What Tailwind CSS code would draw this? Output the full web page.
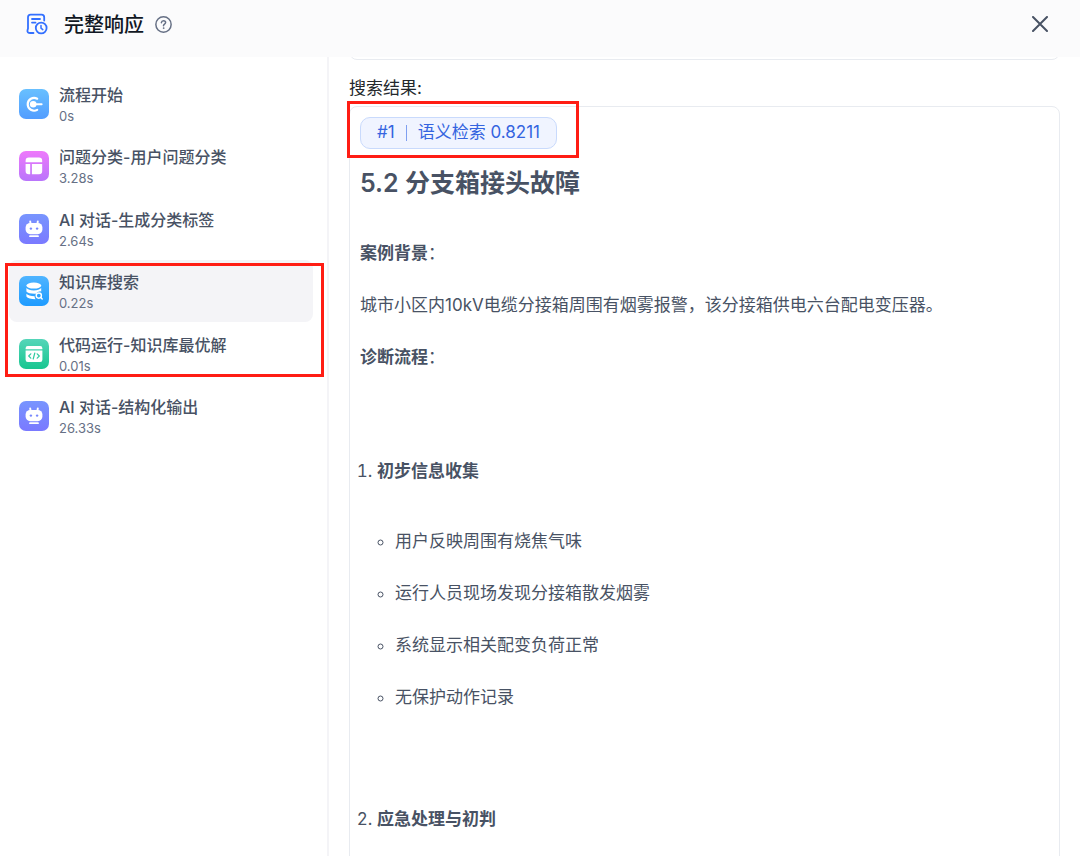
<!DOCTYPE html>
<html lang="zh-CN">
<head>
    <meta charset="UTF-8">
    <meta name="viewport" content="width=device-width, initial-scale=1.0">
    <title>完整响应</title>
    <script src="https://cdn.jsdelivr.net/npm/@tailwindcss/browser@4"></script>
</head>
<body class="h-screen flex flex-col overflow-hidden bg-white text-[#485264] font-['Inter','Noto_Sans_CJK_SC',sans-serif]">
    <!-- Header -->
    <header class="relative z-10 h-[57px] shrink-0 bg-[#fbfbfc] flex items-start pl-[26px] pr-7 pt-2">
        <div class="flex h-8 flex-1 items-center">
            <svg class="size-[22px]" viewBox="0 0 22 22" fill="none" stroke="#3370ff" stroke-width="1.8" stroke-linecap="round" stroke-linejoin="round">
                <path d="M7.5 20H4.2C2.2 20 1.1 19 1.5 17.2L2 15.5V4.2C2 2.6 3 1.6 4.6 1.6H15.6C17.2 1.6 18.2 2.6 18.2 4.2V7.6" />
                <path d="M6 6H14M6 9.6H9.5" />
                <circle cx="15.2" cy="15" r="5.4" />
                <path d="M15 12.6V15.2L16.8 16.6" stroke-width="1.5" />
            </svg>
            <h1 class="ml-4 pt-0.5 text-[20px] leading-8 font-medium text-[#111824]">完整响应</h1>
            <button type="button" aria-label="帮助" class="ml-[11px]">
                <svg class="size-[17px]" viewBox="0 0 16 16" fill="none" stroke="#667085" stroke-width="1.4" stroke-linecap="round">
                    <circle cx="8" cy="8" r="7.2" />
                    <path d="M6 6.3C6.2 5.1 7 4.5 8 4.5C9.2 4.5 10 5.2 10 6.2C10 7.6 8 7.8 8 9.1" />
                    <circle cx="8" cy="11.4" r=".4" fill="#667085" stroke-width=".8" />
                </svg>
            </button>
        </div>
        <button type="button" aria-label="关闭" class="flex h-8 w-6 items-center justify-center">
            <svg class="size-4" viewBox="0 0 16 16" fill="none" stroke="#485264" stroke-width="2" stroke-linecap="round">
                <path d="M1 1L15 15M15 1L1 15" />
            </svg>
        </button>
    </header>

    <div class="flex min-h-0 flex-1">
        <!-- Steps -->
        <aside class="w-[329px] shrink-0 border-r-2 border-[#f4f4f7] pt-4 pl-[9px] pr-3.5">
            <ul>
                <li class="flex h-[62px] items-center gap-2.5 rounded-lg px-2.5">
                    <svg class="size-[30px]" viewBox="0 0 30 30">
                        <defs><linearGradient id="start" x2="0" y2="1"><stop stop-color="#68c0ff" /><stop offset="1" stop-color="#529dff" /></linearGradient></defs>
                        <rect width="30" height="30" rx="7" fill="url(#start)" />
                        <path d="M18.2 9.7A6.4 6.4 0 1 0 18.2 20.9" fill="none" stroke="#fff" stroke-width="2.2" stroke-linecap="round" />
                        <circle cx="14.2" cy="15.3" r="3.3" fill="#fff" />
                        <path d="M15 15.3H22.6" stroke="#fff" stroke-width="2" stroke-linecap="round" />
                    </svg>
                    <div>
                        <p class="text-[16px] leading-6 font-medium">流程开始</p>
                        <p class="text-[13px] leading-[18px] text-[#667085]">0s</p>
                    </div>
                </li>
                <li class="flex h-[62px] items-center gap-2.5 rounded-lg px-2.5">
                    <svg class="size-[30px]" viewBox="0 0 30 30">
                        <defs><linearGradient id="classify" x2="0" y2="1"><stop stop-color="#ee79fb" /><stop offset="1" stop-color="#b975fb" /></linearGradient></defs>
                        <rect width="30" height="30" rx="7" fill="url(#classify)" />
                        <path d="M6.6 11.2V9.8Q6.6 6.6 9.8 6.6H20Q23.2 6.6 23.2 9.8V11.2ZM6.6 12.9H11.2V23.2H9.8Q6.6 23.2 6.6 20ZM12.9 12.9H23.2V20Q23.2 23.2 20 23.2H12.9Z" fill="#fff" />
                    </svg>
                    <div>
                        <p class="text-[16px] leading-6 font-medium">问题分类-用户问题分类</p>
                        <p class="text-[13px] leading-[18px] text-[#667085]">3.28s</p>
                    </div>
                </li>
                <li class="flex h-[63px] items-center gap-2.5 rounded-lg px-2.5">
                    <svg class="size-[30px]" viewBox="0 0 30 30">
                        <defs>
                            <linearGradient id="chat" x2="0" y2="1"><stop stop-color="#7895fe" /><stop offset="1" stop-color="#7a79ff" /></linearGradient>
                            <symbol id="bot" viewBox="0 0 30 30">
                                <rect width="30" height="30" rx="7" fill="url(#chat)" />
                                <path d="M11.2 7.4L11.6 10M18.8 7.4L18.4 10" stroke="#fff" stroke-width="1.9" stroke-linecap="round" />
                                <rect x="6.6" y="9" width="16.8" height="11.2" rx="4.6" fill="#fff" />
                                <circle cx="11.9" cy="14.6" r="1.2" fill="#7888fe" />
                                <circle cx="18.1" cy="14.6" r="1.2" fill="#7888fe" />
                                <path d="M11 22.2H19" stroke="#fff" stroke-width="1.8" stroke-linecap="round" />
                            </symbol>
                        </defs>
                        <use href="#bot" />
                    </svg>
                    <div>
                        <p class="text-[16px] leading-6 font-medium">AI 对话-生成分类标签</p>
                        <p class="text-[13px] leading-[18px] text-[#667085]">2.64s</p>
                    </div>
                </li>
                <li class="relative">
                    <div class="flex h-[62px] items-center gap-2.5 rounded-lg bg-[#f4f4f7] px-2.5">
                        <svg class="size-[30px]" viewBox="0 0 30 30">
                            <defs><linearGradient id="dataset" x2="0" y2="1"><stop stop-color="#4fb4ff" /><stop offset="1" stop-color="#1e9bff" /></linearGradient></defs>
                            <rect width="30" height="30" rx="7" fill="url(#dataset)" />
                            <ellipse cx="14.8" cy="9.6" rx="7.4" ry="3" fill="#fff" />
                            <path d="M7.4 12Q9.5 14.4 14.8 14.4T22.2 12V15.4Q19 14.8 16.6 17.8Q9.6 18 7.4 15.6ZM7.4 17.8Q9.6 20 15.6 20.2Q15.6 22 16.6 23.2Q9.4 23.2 7.4 20.6Z" fill="#fff" />
                            <circle cx="19.8" cy="19.6" r="2.6" fill="none" stroke="#fff" stroke-width="1.4" />
                            <path d="M21.8 21.4L23.2 22.9" stroke="#fff" stroke-width="1.4" stroke-linecap="round" />
                        </svg>
                        <div>
                            <p class="text-[16px] leading-6 font-medium">知识库搜索</p>
                            <p class="text-[13px] leading-[18px] text-[#667085]">0.22s</p>
                        </div>
                    </div>
                    <!-- Marks the search and code steps -->
                    <div class="pointer-events-none absolute top-[3px] -left-1 -right-[11px] h-[114px] border-3 border-[#ff1d14]"></div>
                </li>
                <li class="flex h-[63px] items-center gap-2.5 rounded-lg px-2.5">
                    <svg class="size-[30px]" viewBox="0 0 30 30">
                        <defs><linearGradient id="code" x2="0" y2="1"><stop stop-color="#55d5b9" /><stop offset="1" stop-color="#18c690" /></linearGradient></defs>
                        <rect width="30" height="30" rx="7" fill="url(#code)" />
                        <path d="M6.6 10.2V9.2Q6.6 7 8.8 7H21.2Q23.4 7 23.4 9.2V10.2ZM6.6 11.5H23.4V20.8Q23.4 23 21.2 23H8.8Q6.6 23 6.6 20.8Z" fill="#fff" />
                        <path d="M11.8 14.8L9.7 17L11.8 19.2M18.2 14.8L20.3 17L18.2 19.2M15.8 14L14.2 20" fill="none" stroke="#2ecb9f" stroke-width="1.2" stroke-linecap="round" stroke-linejoin="round" />
                    </svg>
                    <div>
                        <p class="text-[16px] leading-6 font-medium">代码运行-知识库最优解</p>
                        <p class="text-[13px] leading-[18px] text-[#667085]">0.01s</p>
                    </div>
                </li>
                <li class="flex h-[62px] items-center gap-2.5 rounded-lg px-2.5">
                    <svg class="size-[30px]" viewBox="0 0 30 30"><use href="#bot" /></svg>
                    <div>
                        <p class="text-[16px] leading-6 font-medium">AI 对话-结构化输出</p>
                        <p class="text-[13px] leading-[18px] text-[#667085]">26.33s</p>
                    </div>
                </li>
            </ul>
        </aside>

        <!-- Response detail -->
        <main class="min-w-0 flex-1 overflow-hidden pl-5 pr-5">
            <!-- Previous field, scrolled under the header -->
            <div class="-mt-8 h-[35px] rounded-lg border border-[#e8ebf0]"></div>
            <h2 class="mt-[15px] mb-[5px] text-[17px] leading-[26px] text-[#24282c]">搜索结果:</h2>

            <section class="relative rounded-lg border border-[#e8ebf0] px-2.5 pt-2.5 pb-10">
                <!-- Marks the score -->
                <div class="pointer-events-none absolute -top-1.5 -left-[3px] h-[57px] w-[232px] border-3 border-[#ff1d14]"></div>

                <div class="inline-flex h-8 items-center rounded-[10px] border border-[#c9dafc] bg-[#f0f4ff] px-4 text-[17px] text-[#3464e0]">
                    <span>#1</span>
                    <span class="mx-[11px] h-4 w-px bg-[#7f9ff0]"></span>
                    <span>语义检索 0.8211</span>
                </div>

                <div class="text-[17px] leading-7">
                    <h3 class="mt-4 mb-[38px] text-[25px] leading-9 font-semibold">5.2 分支箱接头故障</h3>
                    <p class="mb-6"><strong class="font-semibold">案例背景</strong>：</p>
                    <p class="mb-6">城市小区内10kV电缆分接箱周围有烟雾报警，该分接箱供电六台配电变压器。</p>
                    <p><strong class="font-semibold">诊断流程</strong>：</p>
                    <ol class="mt-[86px] list-decimal pl-[17px]">
                        <li>
                            <strong class="font-semibold">初步信息收集</strong>
                            <ul class="mt-[42px] mb-[94px] list-[circle] space-y-6 pl-[18px]">
                                <li>用户反映周围有烧焦气味</li>
                                <li>运行人员现场发现分接箱散发烟雾</li>
                                <li>系统显示相关配变负荷正常</li>
                                <li>无保护动作记录</li>
                            </ul>
                        </li>
                        <li><strong class="font-semibold">应急处理与初判</strong></li>
                    </ol>
                </div>
            </section>
        </main>
    </div>
</body>
</html>
